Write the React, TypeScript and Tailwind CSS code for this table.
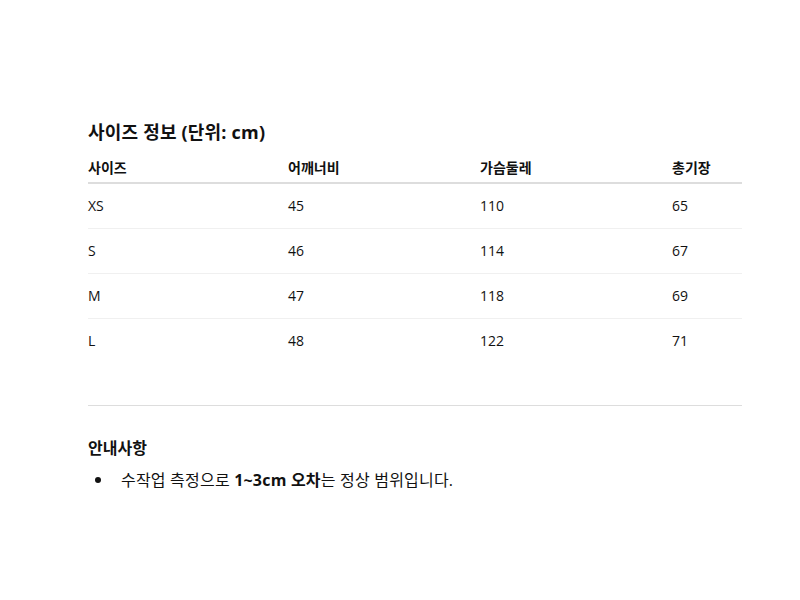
const rows = [
  { size: "XS", shoulder: 45, chest: 110, length: 65 },
  { size: "S", shoulder: 46, chest: 114, length: 67 },
  { size: "M", shoulder: 47, chest: 118, length: 69 },
  { size: "L", shoulder: 48, chest: 122, length: 71 },
];

export default function App() {
  return (
    <main
      className="min-h-screen bg-white text-[#111] pl-[88px] pr-[58px] pt-[119px]"
      style={{ fontFamily: '"Open Sans", "Noto Sans CJK KR", sans-serif' }}
    >
      <h2 className="text-[18px] leading-[27px] font-bold tracking-[0.2px]">사이즈 정보 (단위: cm)</h2>
      <table className="w-full table-fixed border-collapse mt-2 text-[14px]">
        <colgroup>
          <col className="w-[200px]" />
          <col className="w-[192px]" />
          <col className="w-[192px]" />
          <col />
        </colgroup>
        <thead>
          <tr className="border-b-2 border-[#dddddd]">
            <th className="text-left font-bold leading-5 py-1">사이즈</th>
            <th className="text-left font-bold leading-5 py-1">어깨너비</th>
            <th className="text-left font-bold leading-5 py-1">가슴둘레</th>
            <th className="text-left font-bold leading-5 py-1">총기장</th>
          </tr>
        </thead>
        <tbody>
          {rows.map((r, i) => (
            <tr key={r.size} className={i < rows.length - 1 ? "border-b border-[#f0f0f0]" : ""}>
              <td className="py-[11px] leading-[22px]">{r.size}</td>
              <td className="py-[11px] leading-[22px]">{r.shoulder}</td>
              <td className="py-[11px] leading-[22px]">{r.chest}</td>
              <td className="py-[11px] leading-[22px]">{r.length}</td>
            </tr>
          ))}
        </tbody>
      </table>

      <hr className="mt-[42px] border-t border-[#dddddd]" />

      <section className="mt-[30px]">
        <h3 className="text-[16px] leading-6 font-bold">안내사항</h3>
        <ul className="mt-2 text-[16px] leading-6">
          <li className="flex items-center">
            <span className="w-[33px] pl-[7px] flex">
              <span className="w-[6px] h-[6px] rounded-full bg-[#111]" />
            </span>
            <span className="tracking-[0.2px]">
              수작업 측정으로 <strong className="font-bold">1~3cm 오차</strong>는 정상 범위입니다.
            </span>
          </li>
        </ul>
      </section>
    </main>
  );
}
